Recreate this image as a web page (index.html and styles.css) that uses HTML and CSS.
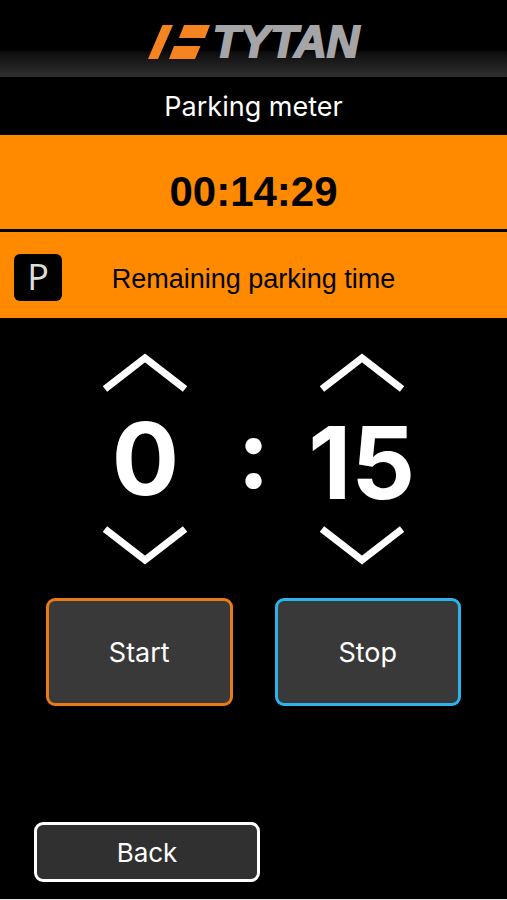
FILE: index.html
```html
<!DOCTYPE html>
<html lang="en">
<head>
<meta charset="utf-8">
<meta name="viewport" content="width=device-width, initial-scale=1">
<title>Parking meter</title>
<link rel="stylesheet" href="styles.css">
</head>
<body>
<div class="app">
  <header class="brand">
    <svg class="brand-mark" viewBox="0 0 62 34" aria-hidden="true">
      <path d="M14.500 0H25L10 34H0zM36 0H62L57 13H31zM26 21H52.500L47 34H21z"/>
    </svg>
    <span class="brand-name">TYTAN</span>
  </header>
  <h1 class="title">Parking meter</h1>
  <main>
    <div class="countdown">00:14:29</div>
    <div class="status">
      <span class="badge">P</span>
      <span class="status-text">Remaining parking time</span>
    </div>
    <div class="picker">
      <button class="step" aria-label="More hours"><svg class="chevron" viewBox="0 0 84 38"><path d="M2 35 42 4 82 35"/></svg></button>
      <span></span>
      <button class="step" aria-label="More minutes"><svg class="chevron" viewBox="0 0 84 38"><path d="M2 35 42 4 82 35"/></svg></button>
      <span class="hours">0</span>
      <span class="colon">:</span>
      <span class="minutes">15</span>
      <button class="step" aria-label="Fewer hours"><svg class="chevron" viewBox="0 0 84 38"><path d="M2 3 42 34 82 3"/></svg></button>
      <span></span>
      <button class="step" aria-label="Fewer minutes"><svg class="chevron" viewBox="0 0 84 38"><path d="M2 3 42 34 82 3"/></svg></button>
    </div>
    <div class="actions">
      <button class="action start">Start</button>
      <button class="action stop">Stop</button>
    </div>
  </main>
  <footer class="footer">
    <button class="back">Back</button>
  </footer>
</div>
</body>
</html>
```
FILE: styles.css
```css
* {
  box-sizing: border-box;
}

body {
  margin: 0;
  background: #000;
  color: #fff;
  font-family: Inter, "Liberation Sans", sans-serif;
}

button {
  font: inherit;
  color: inherit;
  cursor: pointer;
}

.app {
  display: flex;
  flex-direction: column;
  min-height: 100vh;
  border-bottom: 1px solid #e4e4e4;
}

.brand {
  display: flex;
  justify-content: center;
  align-items: center;
  gap: 3px;
  height: 77px;
  padding-top: 6px;
  background: linear-gradient(#000 50px, #0d0d0d 52px, #303030 77px);
}

.brand-mark {
  width: 62px;
  height: 34px;
  fill: #f5831f;
}

.brand-name {
  color: #a5a5a8;
  font: italic bold 45px/34px "Liberation Sans", sans-serif;
  -webkit-text-stroke: 2px #a5a5a8;
}

.title {
  margin: 0;
  padding-top: 2px;
  font-size: 27px;
  font-weight: 400;
  line-height: 56px;
  text-align: center;
}

.countdown {
  padding: 20px 0 0;
  background: #ff8a00;
  border-bottom: 3px solid #000;
  color: #000;
  font: bold 42px/74px "Liberation Sans", sans-serif;
  text-align: center;
}

.status {
  display: grid;
  grid-template-columns: 48px 1fr 48px;
  align-items: center;
  height: 86px;
  padding: 4px 14px 0;
  background: #ff8a00;
  color: #000;
}

.badge {
  height: 47px;
  border-radius: 6px;
  background: #000;
  color: #ddd;
  font: 400 36px/46px "Open Sans", sans-serif;
  text-align: center;
}

.status-text {
  padding-top: 3px;
  font: 27px/36px "Liberation Sans", sans-serif;
  text-align: center;
}

.picker {
  display: grid;
  grid-template-columns: repeat(3, minmax(0, 1fr));
  width: 64%;
  margin: 35px auto 0;
  justify-items: center;
  align-items: center;
}

.step {
  display: flex;
  padding: 0;
  border: 0;
  background: none;
}

.chevron {
  width: 84px;
  height: 40px;
  fill: none;
  stroke: #fff;
  stroke-width: 7px;
}

.hours,
.minutes,
.colon {
  line-height: 132px;
  font-weight: 700;
}

.hours {
  font-size: 100px;
}

.colon {
  padding-bottom: 12px;
  font-size: 96px;
  line-height: 120px;
}

.minutes {
  padding-top: 8px;
  font-size: 100px;
  line-height: 124px;
}

.actions {
  display: flex;
  gap: 42px;
  padding: 33px 46px 0;
}

.action {
  flex: 1;
  height: 108px;
  border: 3px solid #ea7b14;
  border-radius: 9px;
  background: #393939;
  font-size: 27px;
}

.stop {
  border-color: #2bb3ee;
}

.footer {
  margin-top: auto;
  padding: 0 34px 17px;
}

.back {
  width: 226px;
  height: 60px;
  border: 3px solid #fff;
  border-radius: 9px;
  background: #303030;
  font-size: 26px;
}
```
